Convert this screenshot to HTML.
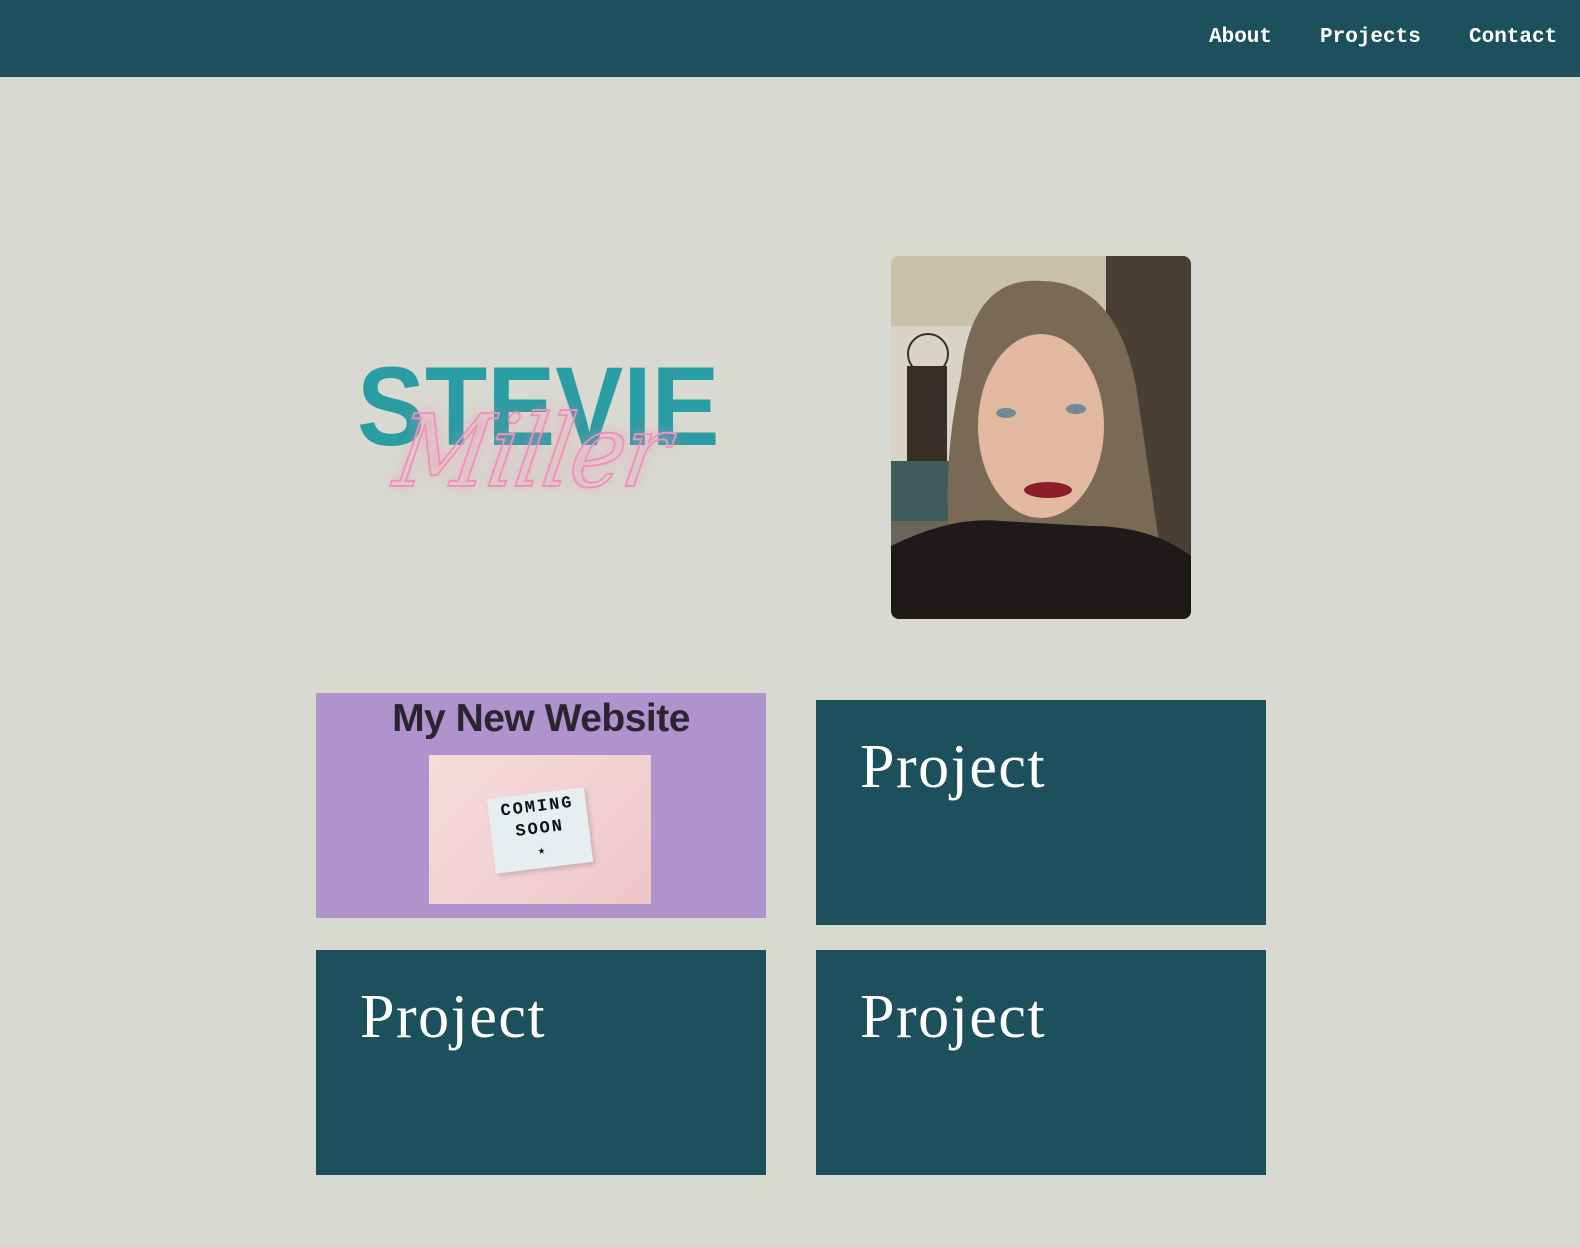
<!DOCTYPE html>
<html><head><meta charset="utf-8"><style>
*{margin:0;padding:0;box-sizing:border-box}
body{width:1580px;height:1247px;background:#d8d9d0;position:relative;overflow:hidden;font-family:"Liberation Sans",sans-serif}
.nav{position:absolute;left:0;top:0;width:1580px;height:77px;background:#1c505c}
.nav a{position:absolute;top:26px;color:#fff;font:bold 21px "Liberation Mono",monospace;text-decoration:none;letter-spacing:0}
.stevie{position:absolute;left:357px;top:351px;font-weight:bold;font-size:112px;color:#2a9ca3;line-height:1;transform:scaleX(0.91);transform-origin:left top}
.miller{position:absolute;left:405px;top:402px;font-family:"DejaVu Serif",serif;font-style:italic;font-size:100px;color:transparent;-webkit-text-stroke:2px #f28fba;text-shadow:0 0 14px rgba(242,140,185,.55);letter-spacing:-2px;transform:scaleX(0.92) skewX(-10deg);transform-origin:left top;line-height:1}
.photo{position:absolute;left:891px;top:256px;width:300px;height:363px;border-radius:8px;overflow:hidden}
.card{position:absolute;width:450px;height:225px;background:#1c505c}
.card span{position:absolute;left:44px;top:32px;color:#fff;font-family:"Liberation Serif",serif;font-size:62px;letter-spacing:1.5px}
.c1{left:316px;top:693px;background:#b093cc}
.c1 h2{position:absolute;left:0;width:450px;top:4px;text-align:center;font-size:39px;color:#2a2530;font-weight:bold;letter-spacing:-0.5px}
.img{position:absolute;left:113px;top:62px;width:222px;height:149px;background:linear-gradient(135deg,#f5dcdc,#efc6c8);overflow:hidden}
.sign{position:absolute;left:62px;top:38px;width:98px;height:75px;background:#e6eef0;transform:rotate(-7deg);box-shadow:2px 3px 4px rgba(0,0,0,.15);text-align:center;font:bold 17px "Liberation Mono",monospace;color:#111;line-height:22px;padding-top:4px;letter-spacing:2px}
.sign i{display:block;font-style:normal;font-size:12px;line-height:20px;color:#111}
</style></head><body>
<div class="nav">
<a style="left:1209px">About</a>
<a style="left:1320px">Projects</a>
<a style="left:1469px">Contact</a>
</div>
<div class="stevie">STEVIE</div>
<div class="miller">Miller</div>
<div class="photo">
<svg width="300" height="363" viewBox="0 0 300 363">
<rect width="300" height="363" fill="#c9c0a8"/>
<rect x="0" y="70" width="80" height="140" fill="#d8d3c4"/>
<rect x="215" y="0" width="85" height="363" fill="#4a3f33"/>
<circle cx="37" cy="98" r="20" fill="none" stroke="#333" stroke-width="2"/>
<rect x="16" y="110" width="40" height="95" fill="#3a2f26"/>
<rect x="0" y="205" width="70" height="60" fill="#3f5b5a"/>
<rect x="0" y="265" width="90" height="40" fill="#6a665c"/>
<path d="M70 120 Q80 20 150 25 Q225 25 245 130 Q260 230 270 300 L60 300 Q50 210 70 120Z" fill="#7a6a55"/>
<ellipse cx="150" cy="170" rx="63" ry="92" fill="#e2b8a0"/>
<path d="M95 95 Q150 40 210 95 L210 60 Q150 30 95 60Z" fill="#7a6a55"/>
<ellipse cx="115" cy="157" rx="10" ry="5" fill="#6f8a95"/>
<ellipse cx="185" cy="153" rx="10" ry="5" fill="#6f8a95"/>
<ellipse cx="157" cy="234" rx="24" ry="8" fill="#8a1e2a"/>
<path d="M0 290 Q60 260 110 265 L200 270 Q260 270 300 300 L300 363 L0 363Z" fill="#1e1a1a"/>
</svg>
</div>
<div class="card c1"><h2>My New Website</h2>
<div class="img"><div class="sign">COMING<br>SOON<i>★</i></div></div></div>
<div class="card" style="left:816px;top:700px"><span>Project</span></div>
<div class="card" style="left:316px;top:950px"><span>Project</span></div>
<div class="card" style="left:816px;top:950px"><span>Project</span></div>
</body></html>
